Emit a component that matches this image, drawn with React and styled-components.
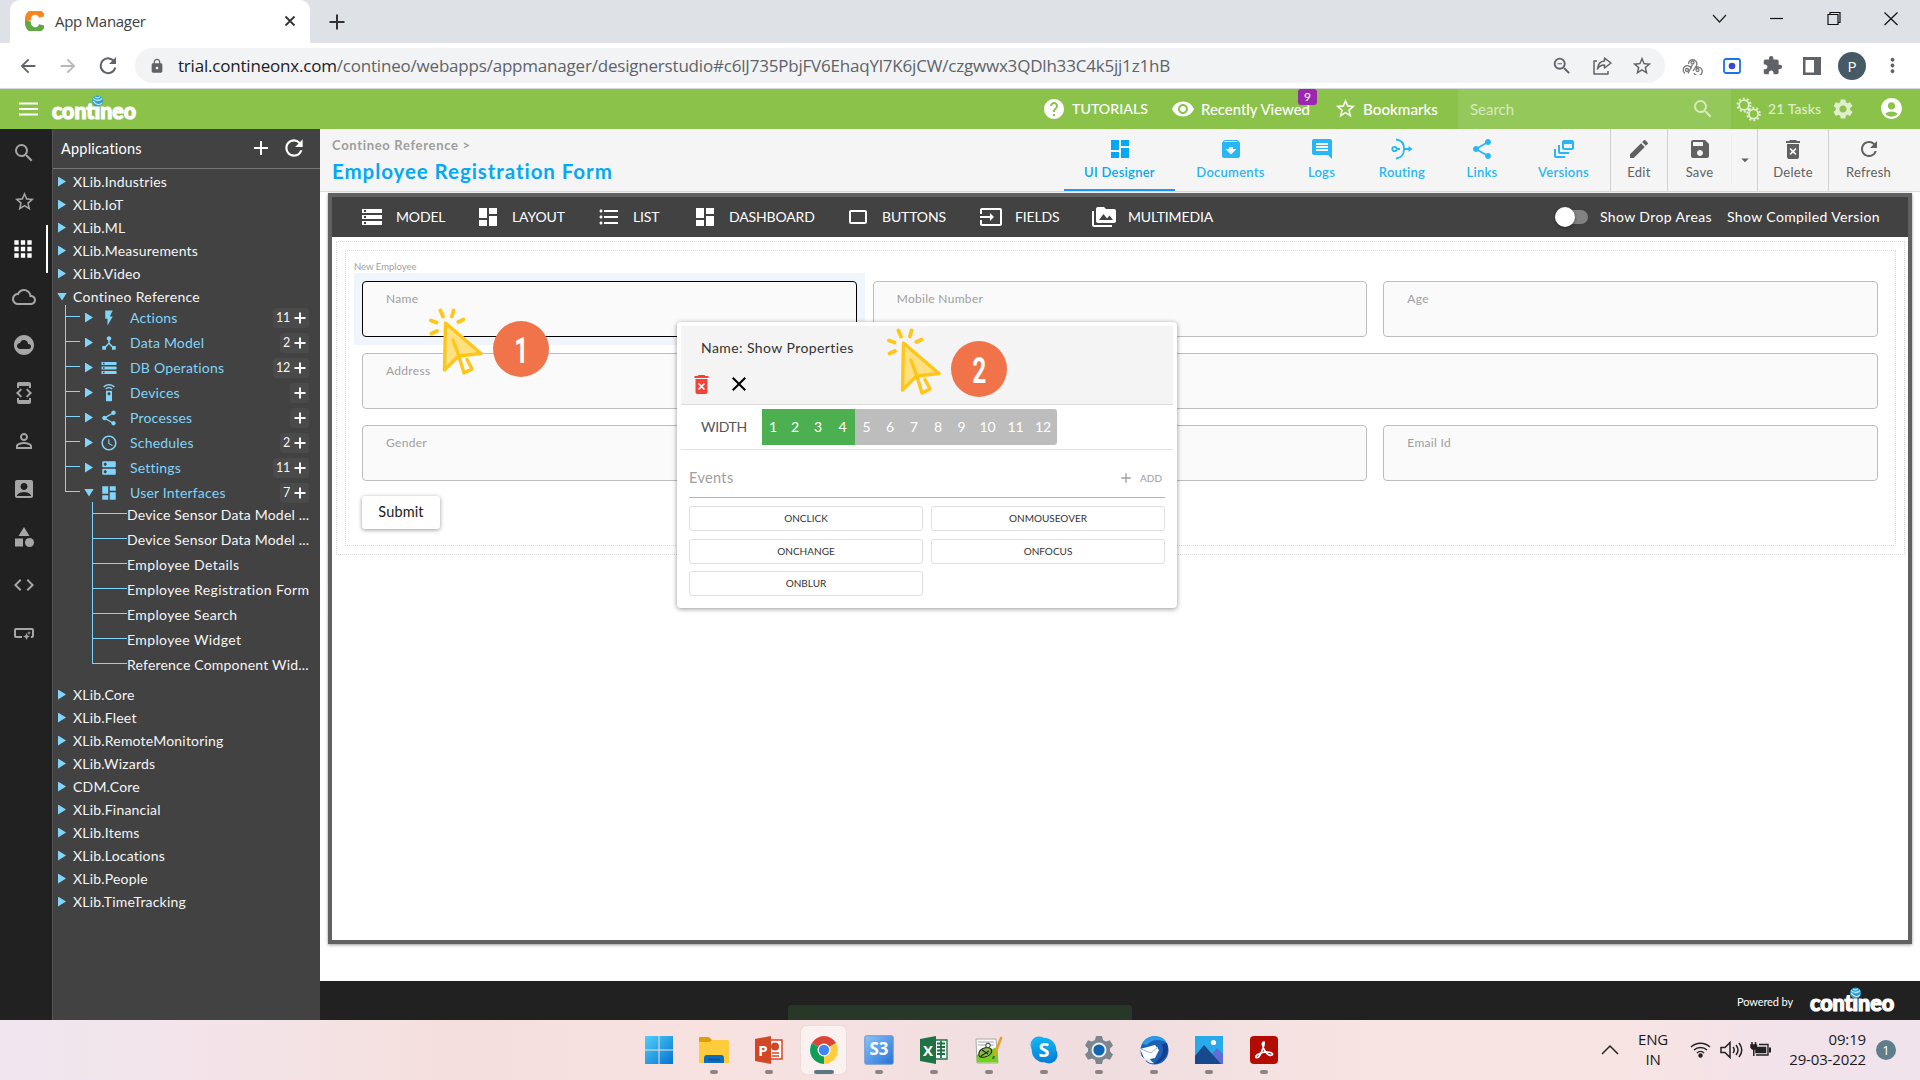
import React from 'react';
import styled, { createGlobalStyle, css } from 'styled-components';
import {
  MdSearch, MdStarBorder, MdApps, MdCloudQueue, MdCloudCircle, MdDeveloperMode, MdPermIdentity,
  MdAccountBox, MdCategory, MdCode, MdSmartButton, MdAdd, MdRefresh, MdFlashOn, MdDeviceHub,
  MdStorage, MdSettingsRemote, MdShare, MdAccessTime, MdDns, MdDashboard, MdHelp,
  MdRemoveRedEye, MdSettings, MdAccountCircle, MdArchive, MdComment, MdDynamicFeed, MdEdit, MdSave,
  MdArrowDropDown, MdFormatListBulleted, MdCrop75, MdInput, MdPermMedia, MdClose,
  MdLock, MdArrowBack, MdArrowForward, MdMoreVert, MdExtension, MdZoomOut,
} from 'react-icons/md';

////////////////////////////////////////////
///////////////[ D A T A ]//////////////////

const RAIL = [
  [MdSearch, 24], [MdStarBorder, 23], [MdApps, 26], [MdCloudQueue, 24], [MdCloudCircle, 24], [MdDeveloperMode, 24],
  [MdPermIdentity, 24], [MdAccountBox, 24], [MdCategory, 24], [MdCode, 24], [MdSmartButton, 24],
];

const APPS_BEFORE = ['XLib.Industries', 'XLib.IoT', 'XLib.ML', 'XLib.Measurements', 'XLib.Video'];
const APPS_AFTER = [
  'XLib.Core', 'XLib.Fleet', 'XLib.RemoteMonitoring', 'XLib.Wizards', 'CDM.Core',
  'XLib.Financial', 'XLib.Items', 'XLib.Locations', 'XLib.People', 'XLib.TimeTracking',
];
const SECTIONS = [
  { name: 'Actions', icon: MdFlashOn, count: 11 },
  { name: 'Data Model', icon: MdDeviceHub, count: 2 },
  { name: 'DB Operations', icon: MdStorage, count: 12 },
  { name: 'Devices', icon: MdSettingsRemote },
  { name: 'Processes', icon: MdShare },
  { name: 'Schedules', icon: MdAccessTime, count: 2 },
  { name: 'Settings', icon: MdDns, count: 11 },
  { name: 'User Interfaces', icon: MdDashboard, count: 7, open: true },
];
const INTERFACES = [
  'Device Sensor Data Model ...', 'Device Sensor Data Model ...', 'Employee Details',
  'Employee Registration Form', 'Employee Search', 'Employee Widget', 'Reference Component Wid...',
];
const WIDTHS = [
  [1, 22], [2, 22], [3, 24], [4, 25], [5, 23], [6, 24], [7, 24], [8, 24], [9, 23], [10, 29], [11, 27], [12, 28],
];

////////////////////////////////////////////
///////////////[ S T Y L E S ]//////////////

const GlobalStyle = createGlobalStyle`
  * { box-sizing: border-box; }
  body {
    margin: 0;
    background: #fff;
    font-family: Lato, "Open Sans", sans-serif;
    font-size: 14px;
    overflow: hidden;
  }
  svg { display: block; flex: none; }
`;

const Screen = styled.div`
  width: 1920px;
  height: 1080px;
  display: flex;
  flex-direction: column;
  overflow: hidden;
`;

/* browser */
const TabStrip = styled.div`
  height: 43px;
  background: #dee1e6;
  display: flex;
  align-items: stretch;
  padding-left: 10px;
  font-family: "Open Sans", sans-serif;
`;
const BrowserTab = styled.div`
  width: 300px;
  background: #fff;
  border-radius: 10px 10px 0 0;
  display: flex;
  align-items: center;
  padding: 0 13px 2px 15px;
  font-size: 15px;
  letter-spacing: -0.28px;
  color: #3c4043;
`;
const TabTitle = styled.span`
  margin-left: 11px;
  flex: 1;
`;
const NewTab = styled.div`
  display: flex;
  align-items: center;
  padding-left: 19px;
  flex: 1;
`;
const WindowButtons = styled.div`
  display: flex;
  height: 38px;
  svg { width: 57px; height: 38px; }
`;
const AddressBar = styled.div`
  height: 46px;
  background: #fff;
  border-bottom: 1px solid #d5d7da;
  display: flex;
  align-items: center;
  padding: 0 8px 0 17px;
  color: #5f6368;
`;
const NavIcon = styled.div`
  width: ${p => p.$w || 40}px;
  padding-left: ${p => p.$pad || 0}px;
  flex: none;
  display: flex;
  opacity: ${p => (p.$faded ? 0.45 : 1)};
`;
const Omnibox = styled.div`
  width: 1530px;
  flex: none;
  height: 35px;
  margin-right: 7px;
  border-radius: 18px;
  background: #f1f3f4;
  display: flex;
  align-items: center;
  padding: 0 3px 0 14px;
`;
const Url = styled.div`
  flex: 1;
  margin-left: 13px;
  font-family: "Open Sans", sans-serif;
  font-size: 17px;
  letter-spacing: -0.2px;
  white-space: nowrap;
  color: #5f6368;
  b { font-weight: 400; color: #202124; }
`;
const Tool = styled.div`
  width: 40px;
  flex: none;
  display: flex;
  justify-content: center;
`;
const Avatar = styled.div`
  width: 28px;
  height: 28px;
  border-radius: 50%;
  background: #455a64;
  color: #fff;
  display: grid;
  place-items: center;
  font: 15px "Open Sans", sans-serif;
`;

/* app header */
const Header = styled.header`
  height: 40px;
  flex: none;
  background: #8bc34a;
  color: #fff;
  display: flex;
  align-items: center;
  padding-left: 17px;
  font-size: 15px;
  font-weight: 500;
`;
const HeaderLinks = styled.div`
  display: flex;
  margin-left: auto;
  padding-bottom: 1px;
`;
const HeaderLink = styled.div`
  width: ${p => p.$w}px;
  display: flex;
  align-items: center;
  gap: 6px;
  font-size: ${p => p.$size || 15}px;
  white-space: nowrap;
`;
const BadgeHost = styled.span`
  position: relative;
`;
const Badge = styled.span`
  position: absolute;
  right: -7px;
  top: -11px;
  width: 19px;
  height: 16px;
  border-radius: 3px;
  background: #9c27b0;
  font-size: 12px;
  line-height: 16px;
  text-align: center;
`;
const SearchBox = styled.div`
  width: 273px;
  height: 40px;
  background: rgba(255, 255, 255, 0.09);
  display: flex;
  align-items: center;
  justify-content: space-between;
  padding: 0 16px 1px 12px;
  color: rgba(255, 255, 255, 0.62);
  font-weight: 400;
`;
const Tasks = styled.div`
  display: flex;
  align-items: center;
  padding: 0 16px 1px 5px;
  font-size: 14px;
  color: rgba(255, 255, 255, 0.72);
  span { width: 63px; margin-left: 7px; letter-spacing: 0.1px; }
  svg:last-child { margin-left: 24px; }
`;
const LogoBox = styled.div`
  width: 86px;
  height: 30px;
  svg { overflow: visible; }
`;

/* columns */
const Body = styled.div`
  flex: 1;
  display: flex;
  min-height: 0;
`;
const Rail = styled.nav`
  width: 52px;
  background: #212121;
  color: #a6a6a6;
`;
const RailItem = styled.div`
  width: 48px;
  height: 48px;
  display: grid;
  place-items: center;
  ${p => p.$active && css`
    color: #fff;
    border-right: 2px solid #fff;
  `}
`;
const Sidebar = styled.aside`
  width: 268px;
  background: #424242;
  border-left: 1px solid #555;
  color: #f5f5f5;
`;
const SideHead = styled.div`
  height: 40px;
  border-bottom: 1px solid #757575;
  display: flex;
  align-items: center;
  padding: 0 13px 1px 8px;
  font-size: 14.5px;
  letter-spacing: 0.2px;
  color: #fff;
  span { flex: 1; }
  svg + svg { margin-left: 8px; }
`;
const Tree = styled.div`
  padding-top: 1px;
`;
const AppRow = styled.div`
  height: 23px;
  display: flex;
  align-items: center;
  padding-left: 5px;
  font-size: 14px;
  letter-spacing: ${p => (p.$open ? 0.3 : 0.2)}px;
`;
const Arrow = styled.i`
  width: ${p => (p.$open ? 10 : 8)}px;
  height: ${p => (p.$open ? 8 : 10)}px;
  background: #81d4fa;
  clip-path: ${p => (p.$open ? 'polygon(0 0, 100% 0, 50% 100%)' : 'polygon(0 0, 100% 50%, 0 100%)')};
  margin-right: ${p => (p.$open ? 6 : 7)}px;
  margin-left: ${p => (p.$open ? -1 : 0)}px;
`;
const Sections = styled.div`
  margin: -3px 0 0 12px;
`;
const SectionRow = styled.div`
  height: 25px;
  display: flex;
  align-items: center;
  padding-right: 11px;
  color: #81d4fa;
  font-size: 14px;
  letter-spacing: 0.2px;
  svg { margin: 0 12px 0 0; }
`;
/* tree connector: a vertical line with a branch in the middle */
const Elbow = styled.span`
  width: ${p => p.$w}px;
  height: 25px;
  flex: none;
  margin-right: ${p => p.$gap || 0}px;
  background:
    linear-gradient(#81d4fa, #81d4fa) 0 0 / 1px ${p => (p.$last ? '12px' : '100%')} no-repeat,
    linear-gradient(#81d4fa, #81d4fa) 0 11px / 100% 1px no-repeat;
`;
const Count = styled.span`
  margin-left: auto;
  height: 20px;
  padding: 0 3px;
  border-radius: 3px;
  background: #4a4a4a;
  color: #f5f5f5;
  display: flex;
  align-items: center;
  gap: 3px;
  font-size: 12.5px;
  letter-spacing: -0.3px;
  svg { margin: 0 0 0 1px; }
`;
const Leaves = styled.div`
  margin: -3px 0 6px 39px;
`;
const Leaf = styled.div`
  height: 25px;
  display: flex;
  align-items: center;
  white-space: nowrap;
  letter-spacing: ${p => (p.$long ? 0.2 : 0.38)}px;
`;

/* page */
const Page = styled.main`
  width: 1600px;
  display: flex;
  flex-direction: column;
`;
const TitleBar = styled.div`
  height: 63px;
  flex: none;
  background: #f5f5f5;
  border-bottom: 1px solid #dcdcdc;
  display: flex;
`;
const Titles = styled.div`
  width: 744px;
  padding: 6px 0 0 12px;
  font-weight: 700;
`;
const Crumb = styled.div`
  height: 20px;
  line-height: 20px;
  font-size: 13px;
  letter-spacing: 0.68px;
  color: #9e9e9e;
`;
const Title = styled.div`
  line-height: 32px;
  font-size: 20.5px;
  letter-spacing: 0.93px;
  color: #03a9f4;
`;
const PageTab = styled.div`
  width: ${p => p.$w}px;
  padding-top: 8px;
  display: flex;
  flex-direction: column;
  align-items: center;
  gap: 3px;
  font-size: 13px;
  letter-spacing: 0.25px;
  font-weight: ${p => (p.$tone === 'grey' ? 400 : 600)};
  color: ${p => (p.$tone === 'grey' ? '#616161' : '#29b6f6')};
  ${p => p.$tone === 'grey' && css`border-left: 1px solid #d0d0d0;`}
  ${p => p.$active && css`
    color: #03a9f4;
    border-bottom: 2px solid #2196f3;
  `}
`;
const IconSlot = styled.span`
  height: 24px;
  display: grid;
  place-items: center;
`;
const SaveCaret = styled.div`
  width: 26px;
  margin: 6px 0;
  border-left: 1px solid #ededed;
  display: flex;
  align-items: center;
  justify-content: center;
  color: #616161;
`;
const Frame = styled.section`
  width: 1584px;
  height: 751px;
  margin: 1px 0 37px 8px;
  border: 4px solid #616161;
  box-shadow: 0 1px 3px rgba(0, 0, 0, 0.4);
  background: #fff;
`;
const Toolbar = styled.div`
  height: 40px;
  background: #424242;
  color: #fff;
  display: flex;
  align-items: center;
  padding: 0 0 1px 28px;
  font-size: 14px;
  letter-spacing: -0.15px;
  white-space: nowrap;
`;
const ToolItem = styled.div`
  width: ${p => p.$w}px;
  display: flex;
  align-items: center;
  gap: 12px;
`;
const Switch = styled.span`
  width: 33px;
  height: 14px;
  margin: 0 12px 0 auto;
  border-radius: 7px;
  background: #828282;
  display: flex;
  align-items: center;
  &::before {
    content: '';
    width: 20px;
    height: 20px;
    border-radius: 50%;
    background: #fff;
    box-shadow: 0 1px 3px rgba(0, 0, 0, 0.5);
  }
`;
const ToggleText = styled.span`
  width: ${p => p.$w}px;
  letter-spacing: 0.38px;
`;
const DropOuter = styled.div`
  margin: 4px 3px 0 4px;
  height: 314px;
  border: 1px dotted #dadada;
  padding: 8px;
`;
const DropInner = styled.div`
  height: 296px;
  border: 1px dotted #dadada;
  padding: 9px 9px 0 8px;
`;
const FormName = styled.div`
  height: 13px;
  font-size: 9.5px;
  line-height: 13px;
  color: #9e9e9e;
`;
const Fields = styled.div`
  display: grid;
  grid-template-columns: repeat(3, 1fr);
`;
const Cell = styled.div`
  height: 72px;
  padding: 8px;
  grid-column: span ${p => p.$span || 1};
  background: ${p => (p.$active ? '#eff5fa' : 'transparent')};
`;
const Field = styled.div`
  height: 56px;
  border: 1px solid ${p => (p.$active ? '#000' : '#bdbdbd')};
  border-radius: 4px;
  background: #fafafa;
  padding: 9px 23px;
  font-size: 12px;
  letter-spacing: 0.3px;
  color: #9e9e9e;
`;
const Submit = styled.button`
  width: 78px;
  height: 33px;
  margin: 7px 8px;
  padding-bottom: 3px;
  border: 0;
  border-radius: 3px;
  background: #fff;
  box-shadow: 0 1px 4px rgba(0, 0, 0, 0.4);
  font: 14.5px Lato, sans-serif;
  letter-spacing: 0.15px;
  color: #212121;
`;

/* properties popup, floats over the form */
const Popup = styled.div`
  position: absolute;
  left: 677px;
  top: 322px;
  width: 500px;
  height: 286px;
  padding: 4px;
  border-radius: 4px;
  background: #fff;
  box-shadow: 0 1px 5px rgba(0, 0, 0, 0.42);
`;
const PopupHead = styled.div`
  height: 79px;
  background: #f4f4f4;
  border-bottom: 1px solid #dcdcdc;
  padding: 12px 0 0 20px;
  font-size: 14px;
  line-height: 20px;
  letter-spacing: 0.42px;
  color: #333;
`;
const PopupActions = styled.div`
  display: flex;
  gap: 18px;
  margin: 14px 0 0 -7px;
  align-items: center;
`;
const WidthRow = styled.div`
  height: 45px;
  border-bottom: 1px solid #e2e2e2;
  display: flex;
  align-items: center;
  padding: 0 0 0 20px;
  font-size: 14px;
  color: #555;
  > span { width: 61px; letter-spacing: -0.35px; padding-bottom: 1px; }
`;
const Step = styled.div`
  width: ${p => p.$w}px;
  height: 36px;
  padding-bottom: 1px;
  background: ${p => (p.$on ? '#4caf50' : '#bdbdbd')};
  color: #fff;
  display: grid;
  place-items: center;
  &:last-child { border-radius: 0 3px 3px 0; }
`;
const EventsHead = styled.div`
  height: 48px;
  margin: 0 8px 8px;
  padding: 8px 3px 0 0;
  border-bottom: 1px solid #b5b5b5;
  display: flex;
  align-items: center;
  color: #9e9e9e;
  font-size: 14.5px;
  letter-spacing: 0.35px;
  span { flex: 1; }
  small { font-size: 10px; margin-left: 6px; letter-spacing: 0; }
`;
const Events = styled.div`
  margin: 0 8px;
  display: grid;
  grid-template-columns: 1fr 1fr;
  grid-auto-rows: 25px;
  gap: 7.5px 8px;
`;
const EventButton = styled.div`
  border: 1px solid #e0e0e0;
  border-radius: 3px;
  padding-bottom: 1px;
  display: grid;
  place-items: center;
  font-size: 10px;
  color: #333;
`;
const Marker = styled.div`
  position: absolute;
  left: ${p => p.$x}px;
  top: ${p => p.$y}px;
  display: flex;
`;
const Disc = styled.div`
  width: 56px;
  height: 56px;
  margin: 13px 0 0 10px;
  border-radius: 50%;
  background: #f0734a;
  color: #fff;
  display: grid;
  place-items: center;
  font: 700 36px Roboto, sans-serif;
  span { transform: scaleX(0.68); line-height: 56px; padding-top: 2px; }
`;

const Footer = styled.footer`
  height: 39px;
  background: #212121;
  color: #fff;
  display: flex;
  align-items: center;
  justify-content: flex-end;
  padding-right: 24px;
  font-size: 11px;
  letter-spacing: -0.1px;
  span { width: 73px; padding-top: 2px; }
`;
const Toast = styled.div`
  position: absolute;
  left: 788px;
  top: 1005px;
  width: 344px;
  height: 15px;
  border-radius: 4px 4px 0 0;
  background: #283828;
`;

/* taskbar */
const Taskbar = styled.div`
  height: 60px;
  flex: none;
  background: linear-gradient(90deg, #f0e6ef 0%, #f3e4ea 10%, #f5dfdc 24%, #f7e2e0 38%, #efdde0 57%, #f8e4e2 72%, #f8e4e2 84%, #f2e2ea 93%, #f0e3ec 100%);
  display: flex;
  padding-left: 631px;
  font-family: "Open Sans", sans-serif;
  color: #1a1a1a;
`;
const Task = styled.div`
  width: 55px;
  display: flex;
  flex-direction: column;
  align-items: center;
  padding-top: 6px;
`;
const TaskIcon = styled.div`
  width: 45px;
  height: 48px;
  border-radius: 5px;
  display: grid;
  place-items: center;
  ${p => p.$active && css`
    background: rgba(255, 255, 255, 0.55);
    box-shadow: 0 0 1px rgba(0, 0, 0, 0.25);
  `}
`;
const Dot = styled.div`
  width: ${p => (p.$active ? 20 : 8)}px;
  height: 4px;
  margin-top: -4px;
  border-radius: 2px;
  background: ${p => (p.$active ? '#5b7885' : '#8b8385')};
`;
const Tray = styled.div`
  margin-left: auto;
  display: flex;
  align-items: center;
  padding-right: 24px;
`;
const TwoLines = styled.div`
  width: ${p => p.$w}px;
  margin-right: ${p => p.$gap || 0}px;
  text-align: ${p => p.$align};
  font-size: 15px;
  line-height: 20px;
  letter-spacing: -0.15px;
  padding-bottom: 2px;
`;
const Notice = styled.div`
  width: 20px;
  height: 20px;
  margin-left: 10px;
  border-radius: 50%;
  background: #607d8b;
  color: #fff;
  font-size: 13px;
  display: grid;
  place-items: center;
`;

////////////////////////////////////////////
///////////////[ I C O N S ]////////////////

const Logo = () => (
  <LogoBox>
    <svg width="86" height="30" viewBox="0 0 86 30">
      <text x="0" y="25" textLength="84" lengthAdjust="spacingAndGlyphs" fontFamily="Lato, sans-serif"
        fontWeight="900" fontSize="22" fill="#fff" stroke="#fff" strokeWidth="1.200">contineo</text>
      <circle cx="45.500" cy="7" r="5.500" fill="#2f9fd0" />
      <path d="M41 4.500q5 4 9 0M41 7q5 6 9 2M43 3q3 2 5-.500" fill="none" stroke="#b9e4f5" strokeWidth="1.200" />
    </svg>
  </LogoBox>
);

const Plus = () => (
  <svg width="12" height="12" viewBox="0 0 12 12" stroke="currentColor" strokeWidth="2"><path d="M6 .500v11M.500 6h11" /></svg>
);

const TrashX = ({ w, h, color }) => (
  <svg width={w} height={h} viewBox="0 0 14 19">
    <path fill={color} fillRule="evenodd" d="M4 0h6l1 1h3v2H0V1h3zM1 4h12v13a2 2 0 0 1-2 2H3a2 2 0 0 1-2-2zM4.600 8l-1.100 1.100L5.700 11.500 3.500 13.900 4.600 15 7 12.700 9.400 15l1.100-1.100-2.200-2.400 2.200-2.400L9.400 8 7 10.300z" />
  </svg>
);

const Routing = () => (
  <svg width="22" height="22" viewBox="0 0 22 22" fill="none" stroke="currentColor" strokeWidth="1.800">
    <circle cx="3.500" cy="11" r="2.200" />
    <path d="M5.700 11H9M5 1.500c5.500.500 8 4.500 8 9.500s-2.500 9-8 9.500M12 11h8" />
    <path d="M17.500 8l4 3-4 3z" fill="currentColor" stroke="none" />
  </svg>
);

const Cogs = () => (
  <svg width="25" height="26" viewBox="0 0 25 26" fill="none" stroke="currentColor">
    <circle cx="8" cy="9" r="4.800" strokeWidth="1.800" />
    <circle cx="8" cy="9" r="6.500" strokeWidth="2" strokeDasharray="2 2.080" />
    <circle cx="17.500" cy="18" r="4.600" strokeWidth="1.800" />
    <circle cx="17.500" cy="18" r="6.300" strokeWidth="2" strokeDasharray="2 1.960" />
  </svg>
);

const Pointer = () => (
  <svg width="54" height="67" viewBox="0 0 54 67" fill="none" stroke="#ffc61a" strokeWidth="3.400" strokeLinecap="round" strokeLinejoin="round">
    <path d="M11.400 2.500L14 8.500M24.600 2.500L22.900 8.500M34.500 11.500L29.300 14M2 12.500L7.500 14.500M2.500 25.500L8 23" strokeWidth="3.800" />
    <path d="M16.500 15L52 45.500 29.500 48 15.500 62z" fill="#ffe082" />
    <path d="M24 32l5.500 15 5.500 18 8-4-5-9.500" />
  </svg>
);

const Reload = () => (
  <svg width="18" height="19" viewBox="0 0 18 19" fill="none" stroke="currentColor" strokeWidth="2">
    <path d="M15.500 6A7.400 7.400 0 1 0 16.300 11.500" />
    <path d="M17 1v7h-7z" fill="currentColor" stroke="none" />
  </svg>
);

const Share = () => (
  <svg width="19" height="19" viewBox="0 0 19 19" fill="none" stroke="currentColor" strokeWidth="1.500" strokeLinejoin="round">
    <path d="M4 5H1v13h14v-3M11.500 2L18 7l-6.500 5V9C8.500 9 6 10 4.500 13 5 8 7.500 5.200 11.500 5z" />
  </svg>
);

const Rings = () => (
  <svg width="21" height="18" viewBox="0 0 21 18" fill="none" stroke="#777" strokeWidth="1.300">
    <path d="M6.500 7a4.200 4.200 0 1 1 7.500 2.500L11 14M3 16.500a4.300 4.300 0 1 1 6.500-5M12 16a4.300 4.300 0 1 0 2-5.500" />
    <circle cx="10.500" cy="5.500" r="1.500" />
    <circle cx="5" cy="13" r="1.500" />
    <circle cx="15.500" cy="13" r="1.500" />
    <path d="M10.500 7.500L8 12.500l-2 4" />
  </svg>
);

const WinControls = () => (
  <WindowButtons>
    <svg viewBox="0 0 57 38" fill="none" stroke="#222" strokeWidth="1.200"><path d="M21 15l6.500 7L34 15" /></svg>
    <svg viewBox="0 0 57 38" fill="none" stroke="#111" strokeWidth="1.200"><path d="M21 18.500h13" /></svg>
    <svg viewBox="0 0 57 38" fill="none" stroke="#111" strokeWidth="1.200"><path d="M22 14.500h10v10h-10zM24 14v-1.500h10v10h-1.500" /></svg>
    <svg viewBox="0 0 57 38" fill="none" stroke="#111" strokeWidth="1.200"><path d="M21.500 12.500l13 12.500M34.500 12.500L21.500 25" /></svg>
  </WindowButtons>
);

const label = { fontFamily: 'Open Sans, sans-serif', fontWeight: 700, fill: '#fff', textAnchor: 'middle' };

const TASKS = [
  <svg width="30" height="30" viewBox="0 0 30 30">
    <defs><linearGradient id="win" x1="0" y1="0" x2="1" y2="1"><stop offset="0" stopColor="#4fd0fb" /><stop offset="1" stopColor="#0672d0" /></linearGradient></defs>
    <path fill="url(#win)" d="M1 1h13.500v13.500H1zM15.500 1H29v13.500H15.500zM1 15.500h13.500V29H1zM15.500 15.500H29V29H15.500z" />
  </svg>,
  <svg width="30" height="28" viewBox="0 0 30 28">
    <path fill="#dfa007" d="M0 2a1 1 0 0 1 1-1h9l3 3h16v8H0z" />
    <path fill="#fdcb3c" d="M0 6h11l2-2h15a2 2 0 0 1 2 2v21H0z" />
    <path fill="#0f6cbd" d="M5 27v-5a3 3 0 0 1 3-3h14a3 3 0 0 1 3 3v5z" />
    <path stroke="#0b4f8c" strokeWidth="1.500" d="M9 23.500h12" />
  </svg>,
  <svg width="28" height="28" viewBox="0 0 28 28">
    <path fill="#fff" stroke="#d24726" strokeWidth="1.500" d="M14 4h13v19H14z" />
    <circle cx="20" cy="10.500" r="4" fill="#d24726" /><path stroke="#d24726" strokeWidth="1.500" d="M17 17h7M17 20h7" />
    <path fill="#d24726" d="M0 3l16-3v28L0 25z" />
    <text x="8" y="19.500" fontSize="15" {...label}>P</text>
  </svg>,
  <svg width="28" height="28" viewBox="0 0 28 28">
    <path fill="#db4437" d="M14 14L1.900 7A14 14 0 0 1 26.100 7z" />
    <path fill="#ffcd40" d="M14 14L26.100 7A14 14 0 0 1 14 28z" />
    <path fill="#0f9d58" d="M14 14v14A14 14 0 0 1 1.900 7z" />
    <path fill="#db4437" d="M14 7h12.100L14 9z" /><path fill="#ffcd40" d="M20 17l-6 11 2-9z" />
    <circle cx="14" cy="14" r="6.500" fill="#fff" /><circle cx="14" cy="14" r="5.200" fill="#4285f4" />
  </svg>,
  <svg width="30" height="30" viewBox="0 0 30 30">
    <defs><linearGradient id="s3" x1="0" y1="0" x2="1" y2="1"><stop offset="0" stopColor="#8cc4fb" /><stop offset="1" stopColor="#2472d8" /></linearGradient></defs>
    <rect x=".8" y=".8" width="28.400" height="28.400" rx="1.500" fill="url(#s3)" stroke="#6d95c8" />
    <text x="15" y="20" fontSize="17" {...label}>S3</text>
  </svg>,
  <svg width="28" height="28" viewBox="0 0 28 28">
    <path fill="#fff" stroke="#207245" strokeWidth="1.300" d="M14 4h13v19H14z" />
    <path stroke="#207245" strokeWidth="1.800" d="M17 7.500h8M17 11h8M17 14.500h8M17 18h8M21 5v17" />
    <path fill="#207245" d="M0 3l16-3v28L0 25z" />
    <text x="8" y="19.500" fontSize="15" {...label}>X</text>
  </svg>,
  <svg width="28" height="28" viewBox="0 0 28 28">
    <path fill="#fafafa" stroke="#aaa" d="M1 3h20l2 24H2z" />
    <path fill="#75cf1d" d="M1.500 19l21-8 .5 15.500H2z" />
    <path stroke="#aaa" d="M3 6h16M3 9h16" />
    <path fill="#86bf3a" stroke="#222" strokeWidth="1.100" d="M4 17c1-5 9-7 12-4 2 3-1 7-6 8s-7-1-6-4zM7 14l6 4M6 20l8-5" />
    <circle cx="13" cy="9.500" r="2.300" fill="#eee" stroke="#333" />
    <path stroke="#e7a126" strokeWidth="2.600" d="M26.500 1L19 20" /><path stroke="#555" strokeWidth="2" d="M19 20l-1 3" />
  </svg>,
  <svg width="28" height="28" viewBox="0 0 28 28">
    <defs><linearGradient id="sk" x1="0" y1="0" x2="0" y2="1"><stop offset="0" stopColor="#12b5f2" /><stop offset="1" stopColor="#0680d7" /></linearGradient></defs>
    <circle cx="9" cy="9" r="8.500" fill="#12b0f0" /><circle cx="19" cy="19" r="8.500" fill="#0680d7" /><circle cx="14" cy="14" r="12.300" fill="url(#sk)" />
    <text x="14" y="21" fontSize="20" {...label}>S</text>
  </svg>,
  <svg width="30" height="30" viewBox="0 0 30 30">
    <path fill="#7d858d" d="M12 1h6l1 4 3 1.500 4-1.200 3 5.200-3 3v3l3 3-3 5.200-4-1.200-3 1.500-1 4h-6l-1-4-3-1.500-4 1.200-3-5.200 3-3v-3l-3-3 3-5.200 4 1.200L11 5z" />
    <circle cx="15" cy="15" r="7.500" fill="#e8eef2" /><circle cx="15" cy="15" r="5.600" fill="#1066b0" />
  </svg>,
  <svg width="30" height="30" viewBox="0 0 30 30">
    <circle cx="15.500" cy="15.500" r="14" fill="#1b62b7" />
    <path fill="#2e9ae6" d="M3 9C8-2 24-1 28 8c-8-5-16-3-20 2z" />
    <path fill="#143f8f" d="M28 8c4 12-6 21-14 21 8-5 12-12 9-20z" />
    <path fill="#fff" d="M1 14l15-4 4 5-4 8-10 2z" /><path d="M2 14l10 4 7-6" fill="none" stroke="#9fb1cc" />
    <path fill="#f2dfe2" d="M0 19l6 5c1 3 3 5 6 6H0z" />
    <path fill="#e9edf3" d="M6 24c3 4 7 5 9 4-3-2-4-3-4-5z" />
  </svg>,
  <svg width="28" height="28" viewBox="0 0 28 28">
    <path fill="#29a9ea" d="M0 0h28v28H0z" /><path fill="#5b6fd4" d="M14 22L22 12l6 6v10H14z" />
    <path fill="#174a8c" d="M0 20L9 9l17 19H0z" /><circle cx="18.500" cy="6.500" r="2.600" fill="#fff" />
  </svg>,
  <svg width="28" height="28" viewBox="0 0 28 28">
    <rect width="28" height="28" rx="4" fill="#b30b00" />
    <path d="M14 6c-3 0-1 6 1 9s5 5 7 4-1-3-5-3-10 2-11 4 2 3 4-1 5-10 4-13z" fill="none" stroke="#fff" strokeWidth="1.700" />
  </svg>,
];

////////////////////////////////////////////
///////////////[ P A R T S ]////////////////

function Browser() {
  return (
    <>
      <TabStrip>
        <BrowserTab>
          <svg width="19" height="20" viewBox="0 0 19 20" fill="none" strokeWidth="6">
            <path d="M3.200 10A6.900 6.900 0 0 1 17 6" stroke="#f7861e" />
            <path d="M3.200 10A6.900 6.900 0 0 0 17 14" stroke="#5fa845" />
          </svg>
          <TabTitle>App Manager</TabTitle>
          <svg width="14" height="14" viewBox="0 0 14 14" stroke="#333" strokeWidth="1.800"><path d="M2.500 2.500l9 9M11.500 2.500l-9 9" /></svg>
        </BrowserTab>
        <NewTab>
          <svg width="16" height="16" viewBox="0 0 16 16" stroke="#333" strokeWidth="2"><path d="M8 .500v15M.500 8h15" /></svg>
        </NewTab>
        <WinControls />
      </TabStrip>
      <AddressBar>
        <NavIcon><MdArrowBack size={22} /></NavIcon>
        <NavIcon $faded><MdArrowForward size={22} /></NavIcon>
        <NavIcon $w={38} $pad={2}><Reload /></NavIcon>
        <Omnibox>
          <MdLock size={16} />
          <Url><b>trial.contineonx.com</b>/contineo/webapps/appmanager/designerstudio#c6lJ735PbjFV6EhaqYl7K6jCW/czgwwx3QDlh33C4k5jj1z1hB</Url>
          <Tool><MdZoomOut size={22} /></Tool>
          <Tool><Share /></Tool>
          <Tool><MdStarBorder size={22} /></Tool>
        </Omnibox>
        <Tool><Rings /></Tool>
        <Tool>
          <svg width="18" height="16" viewBox="0 0 18 16"><rect x="1" y="1" width="16" height="14" rx="2" fill="#fff" stroke="#1a73e8" strokeWidth="1.800" /><circle cx="9" cy="8" r="3.300" fill="#3b45d6" /></svg>
        </Tool>
        <Tool><MdExtension size={21} /></Tool>
        <Tool>
          <svg width="18" height="18" viewBox="0 0 18 18"><path fill="currentColor" fillRule="evenodd" d="M0 0h18v18H0zM2.500 3v12.500H11V3z" /></svg>
        </Tool>
        <Tool><Avatar>P</Avatar></Tool>
        <Tool><MdMoreVert size={23} /></Tool>
      </AddressBar>
    </>
  );
}

function AppHeader() {
  return (
    <Header>
      <svg width="35" height="16" viewBox="0 0 35 16" stroke="#fff" strokeWidth="2"><path d="M2 2.500h19M2 8h19M2 13.500h19" /></svg>
      <Logo />
      <HeaderLinks>
        <HeaderLink $w={129} $size={14.2}><MdHelp size={24} /><span>TUTORIALS</span></HeaderLink>
        <HeaderLink $w={163} $size={14.9}>
          <MdRemoveRedEye size={24} />
          <BadgeHost>Recently Viewed<Badge>9</Badge></BadgeHost>
        </HeaderLink>
        <HeaderLink $w={124} $size={15.2}><MdStarBorder size={23} /><span>Bookmarks</span></HeaderLink>
      </HeaderLinks>
      <SearchBox>Search<MdSearch size={24} /></SearchBox>
      <Tasks>
        <Cogs />
        <span>21 Tasks</span>
        <MdSettings size={24} />
        <MdAccountCircle size={25} color="#fff" />
      </Tasks>
    </Header>
  );
}

function Applications() {
  return (
    <Sidebar>
      <SideHead><span>Applications</span><MdAdd size={24} /><MdRefresh size={26} /></SideHead>
      <Tree>
        {APPS_BEFORE.map(a => <AppRow key={a}><Arrow />{a}</AppRow>)}
        <AppRow $open><Arrow $open />Contineo Reference</AppRow>
        <Sections>
          {SECTIONS.map(({ name, icon: Icon, count, open }) => (
            <SectionRow key={name}>
              <Elbow $w={15} $gap={5} $last={open} />
              <Arrow $open={open} />
              <Icon size={18} />
              {name}
              <Count>{count}<Plus /></Count>
            </SectionRow>
          ))}
        </Sections>
        <Leaves>
          {INTERFACES.map((l, i) => (
            <Leaf key={i} $long={l.endsWith('...')}><Elbow $w={35} $last={i === INTERFACES.length - 1} />{l}</Leaf>
          ))}
        </Leaves>
        {APPS_AFTER.map(a => <AppRow key={a}><Arrow />{a}</AppRow>)}
      </Tree>
    </Sidebar>
  );
}

function PageHeader() {
  return (
    <TitleBar>
      <Titles>
        <Crumb>Contineo Reference &gt;</Crumb>
        <Title>Employee Registration Form</Title>
      </Titles>
      <PageTab $w={111} $active><MdDashboard size={24} />UI Designer</PageTab>
      <PageTab $w={111}><MdArchive size={24} />Documents</PageTab>
      <PageTab $w={71}><MdComment size={24} />Logs</PageTab>
      <PageTab $w={90}><IconSlot><Routing /></IconSlot>Routing</PageTab>
      <PageTab $w={70}><MdShare size={24} />Links</PageTab>
      <PageTab $w={93}><MdDynamicFeed size={24} />Versions</PageTab>
      <PageTab $w={57} $tone="grey"><MdEdit size={24} />Edit</PageTab>
      <PageTab $w={64} $tone="grey"><MdSave size={24} />Save</PageTab>
      <SaveCaret><MdArrowDropDown size={18} /></SaveCaret>
      <PageTab $w={71} $tone="grey"><IconSlot><TrashX w={14} h={19} color="#616161" /></IconSlot>Delete</PageTab>
      <PageTab $w={80} $tone="grey"><MdRefresh size={24} />Refresh</PageTab>
    </TitleBar>
  );
}

function Designer() {
  return (
    <Frame>
      <Toolbar>
        <ToolItem $w={116}><MdStorage size={24} />MODEL</ToolItem>
        <ToolItem $w={121}><MdDashboard size={24} />LAYOUT</ToolItem>
        <ToolItem $w={96}><MdFormatListBulleted size={24} />LIST</ToolItem>
        <ToolItem $w={153}><MdDashboard size={24} />DASHBOARD</ToolItem>
        <ToolItem $w={133}><MdCrop75 size={24} />BUTTONS</ToolItem>
        <ToolItem $w={113}><MdInput size={24} />FIELDS</ToolItem>
        <ToolItem $w={130}><MdPermMedia size={24} />MULTIMEDIA</ToolItem>
        <Switch />
        <ToggleText $w={127}>Show Drop Areas</ToggleText>
        <ToggleText $w={181}>Show Compiled Version</ToggleText>
      </Toolbar>
      <DropOuter>
        <DropInner>
          <FormName>New Employee</FormName>
          <Fields>
            <Cell $active><Field $active>Name</Field></Cell>
            <Cell><Field>Mobile Number</Field></Cell>
            <Cell><Field>Age</Field></Cell>
            <Cell $span={3}><Field>Address</Field></Cell>
            <Cell><Field>Gender</Field></Cell>
            <Cell><Field /></Cell>
            <Cell><Field>Email Id</Field></Cell>
          </Fields>
          <Submit>Submit</Submit>
        </DropInner>
      </DropOuter>
    </Frame>
  );
}

function Properties() {
  return (
    <Popup>
      <PopupHead>
        Name: Show Properties
        <PopupActions>
          <TrashX w={15} h={19} color="#f44336" />
          <MdClose size={24} color="#000" />
        </PopupActions>
      </PopupHead>
      <WidthRow>
        <span>WIDTH</span>
        {WIDTHS.map(([n, w]) => <Step key={n} $w={w} $on={n < 5}>{n}</Step>)}
      </WidthRow>
      <EventsHead><span>Events</span><MdAdd size={16} /><small>ADD</small></EventsHead>
      <Events>
        {['ONCLICK', 'ONMOUSEOVER', 'ONCHANGE', 'ONFOCUS', 'ONBLUR'].map(e => <EventButton key={e}>{e}</EventButton>)}
      </Events>
    </Popup>
  );
}

function SystemTray() {
  return (
    <Tray>
      <svg width="18" height="12" viewBox="0 0 18 12" fill="none" stroke="#222" strokeWidth="1.500"><path d="M1 10l8-8 8 8" /></svg>
      <TwoLines $w={68} $gap={3} $align="center">ENG<br />IN</TwoLines>
      <svg width="82" height="20" viewBox="0 0 82 20" fill="none" stroke="#222" strokeWidth="1.500">
        <path d="M1 7a14 14 0 0 1 19 0M4 10a9.500 9.500 0 0 1 13 0M7 13a5 5 0 0 1 7 0" />
        <circle cx="10.500" cy="15.500" r="1.500" fill="#222" />
        <path d="M31 7.500h4l5-5v15l-5-5h-4zM43 7q2.500 3 0 6M46 5q4 5 0 10M49 3q5.500 7 0 14" />
        <path d="M69 4.500h9v10.500H66" strokeWidth="1.400" />
        <path d="M80 7.500v5" strokeWidth="2" />
        <path d="M68 7.500h7.500v5H66v-3zM61 5h5.500v2.500l-1.500 1.500h-2.500L61 7.500z" fill="#222" />
        <path d="M62 2v3M65.500 2v3M63.800 9v7" />
      </svg>
      <TwoLines $w={94} $align="right">09:19<br />29-03-2022</TwoLines>
      <Notice>1</Notice>
    </Tray>
  );
}

export default function App() {
  return (
    <Screen>
      <GlobalStyle />
      <Browser />
      <AppHeader />
      <Body>
        <Rail>
          {RAIL.map(([Icon, size], i) => <RailItem key={i} $active={i === 2}><Icon size={size} /></RailItem>)}
        </Rail>
        <Applications />
        <Page>
          <PageHeader />
          <Designer />
          <Footer><span>Powered by</span><Logo /></Footer>
        </Page>
      </Body>
      <Taskbar>
        {TASKS.map((icon, i) => (
          <Task key={i}>
            <TaskIcon $active={i === 3}>{icon}</TaskIcon>
            {i > 0 && <Dot $active={i === 3} />}
          </Task>
        ))}
        <SystemTray />
      </Taskbar>
      <Properties />
      <Marker $x={429} $y={308}><Pointer /><Disc><span>1</span></Disc></Marker>
      <Marker $x={887} $y={328}><Pointer /><Disc><span>2</span></Disc></Marker>
      <Toast />
    </Screen>
  );
}
